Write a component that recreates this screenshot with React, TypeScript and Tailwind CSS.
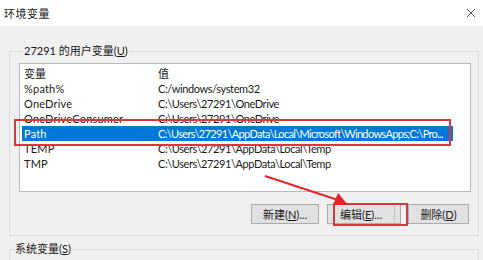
import React from "react";

const rows = [
  { name: "%path%", value: "C:/windows/system32" },
  { name: "OneDrive", value: "C:\\Users\\27291\\OneDrive" },
  { name: "OneDriveConsumer", value: "C:\\Users\\27291\\OneDrive" },
  { name: "Path", value: "C:\\Users\\27291\\AppData\\Local\\Microsoft\\WindowsApps;C:\\Pro...", selected: true },
  { name: "TEMP", value: "C:\\Users\\27291\\AppData\\Local\\Temp" },
  { name: "TMP", value: "C:\\Users\\27291\\AppData\\Local\\Temp" },
];

export default function App() {
  return (
    <div
      className="relative w-[483px] h-[260px] overflow-hidden bg-[#f0f0f0] text-[11px] leading-[15px] text-[#1a1a1a]"
      style={{ fontFamily: 'Lato, "Noto Sans CJK SC", sans-serif' }}
    >
      {/* Title bar */}
      <div className="h-[26px] bg-white flex items-center justify-between pl-[4px] pr-[4px]">
        <span className="text-[11px] leading-none tracking-[0.5px]">环境变量</span>
        <svg width="12" height="12" viewBox="0 0 12 12" className="mr-[2px]">
          <path d="M2 2 L10 10 M10 2 L2 10" stroke="#555" strokeWidth="1" />
        </svg>
      </div>

      {/* User variables group */}
      <fieldset className="mt-[17px] ml-[9px] w-[470px] border border-[#dcdcdc] pl-[9px] pr-[7px] pb-[11px]">
        <legend className="ml-[4px] px-[1px] leading-[16px]">
          27291 的用户变量(<span className="underline">U</span>)
        </legend>
        <div className="mt-[4px] h-[129px] bg-white border border-[#b9b9b9] pt-[2px]">
          <div className="flex h-[15px] items-center ml-[2px]">
            <div className="w-[136px] pl-[2px]">变量</div>
            <div>值</div>
          </div>
          {rows.map((r) => (
            <div
              key={r.name}
              className={
                "flex h-[15px] items-center ml-[2px] w-[431px] whitespace-nowrap overflow-hidden " +
                (r.selected ? "bg-[#0078d7] text-white" : "")
              }
            >
              <div className="w-[136px] pl-[2px] shrink-0 tracking-[0.2px]">{r.name}</div>
              <div className={r.selected ? "tracking-[-0.65px]" : "tracking-[-0.4px]"}>{r.value}</div>
            </div>
          ))}
        </div>
        <div className="mt-[12px] flex justify-end pr-[2px]">
          <button className="w-[68px] h-[20px] bg-[#e1e1e1] border border-[#adadad] text-[11px] leading-none">
            新建(<span className="underline">N</span>)...
          </button>
          <button className="ml-[8px] w-[74px] h-[20px] bg-[#e1e1e1] border border-[#adadad] text-[11px] leading-none flex items-center">
            <span className="w-[67px] h-full flex items-center justify-center border-r border-[#c4c4c4]">
              编辑(<span className="underline">E</span>)...
            </span>
          </button>
          <button className="ml-[7px] w-[61px] h-[20px] bg-[#e1e1e1] border border-[#adadad] text-[11px] leading-none">
            删除(<span className="underline">D</span>)
          </button>
        </div>
      </fieldset>

      {/* System variables group */}
      <fieldset className="mt-[5px] ml-[9px] w-[470px] h-[40px] border border-[#dcdcdc]">
        <legend className="ml-[4px] px-[1px] leading-[16px]">
          系统变量(<span className="underline">S</span>)
        </legend>
      </fieldset>

      {/* Annotations */}
      <div className="absolute left-[14px] top-[119px] w-[437px] h-[27px] border-2 border-[#d33a3f]" />
      <div className="absolute left-[333px] top-[203px] w-[75px] h-[23px] border-2 border-[#d33a3f]" />
      <svg className="absolute left-0 top-0" width="483" height="260" viewBox="0 0 483 260">
        <line x1="265" y1="176" x2="338" y2="200" stroke="#e0282c" strokeWidth="2" />
        <polygon points="348,205 333,205 338,193" fill="#e0282c" />
      </svg>
    </div>
  );
}
